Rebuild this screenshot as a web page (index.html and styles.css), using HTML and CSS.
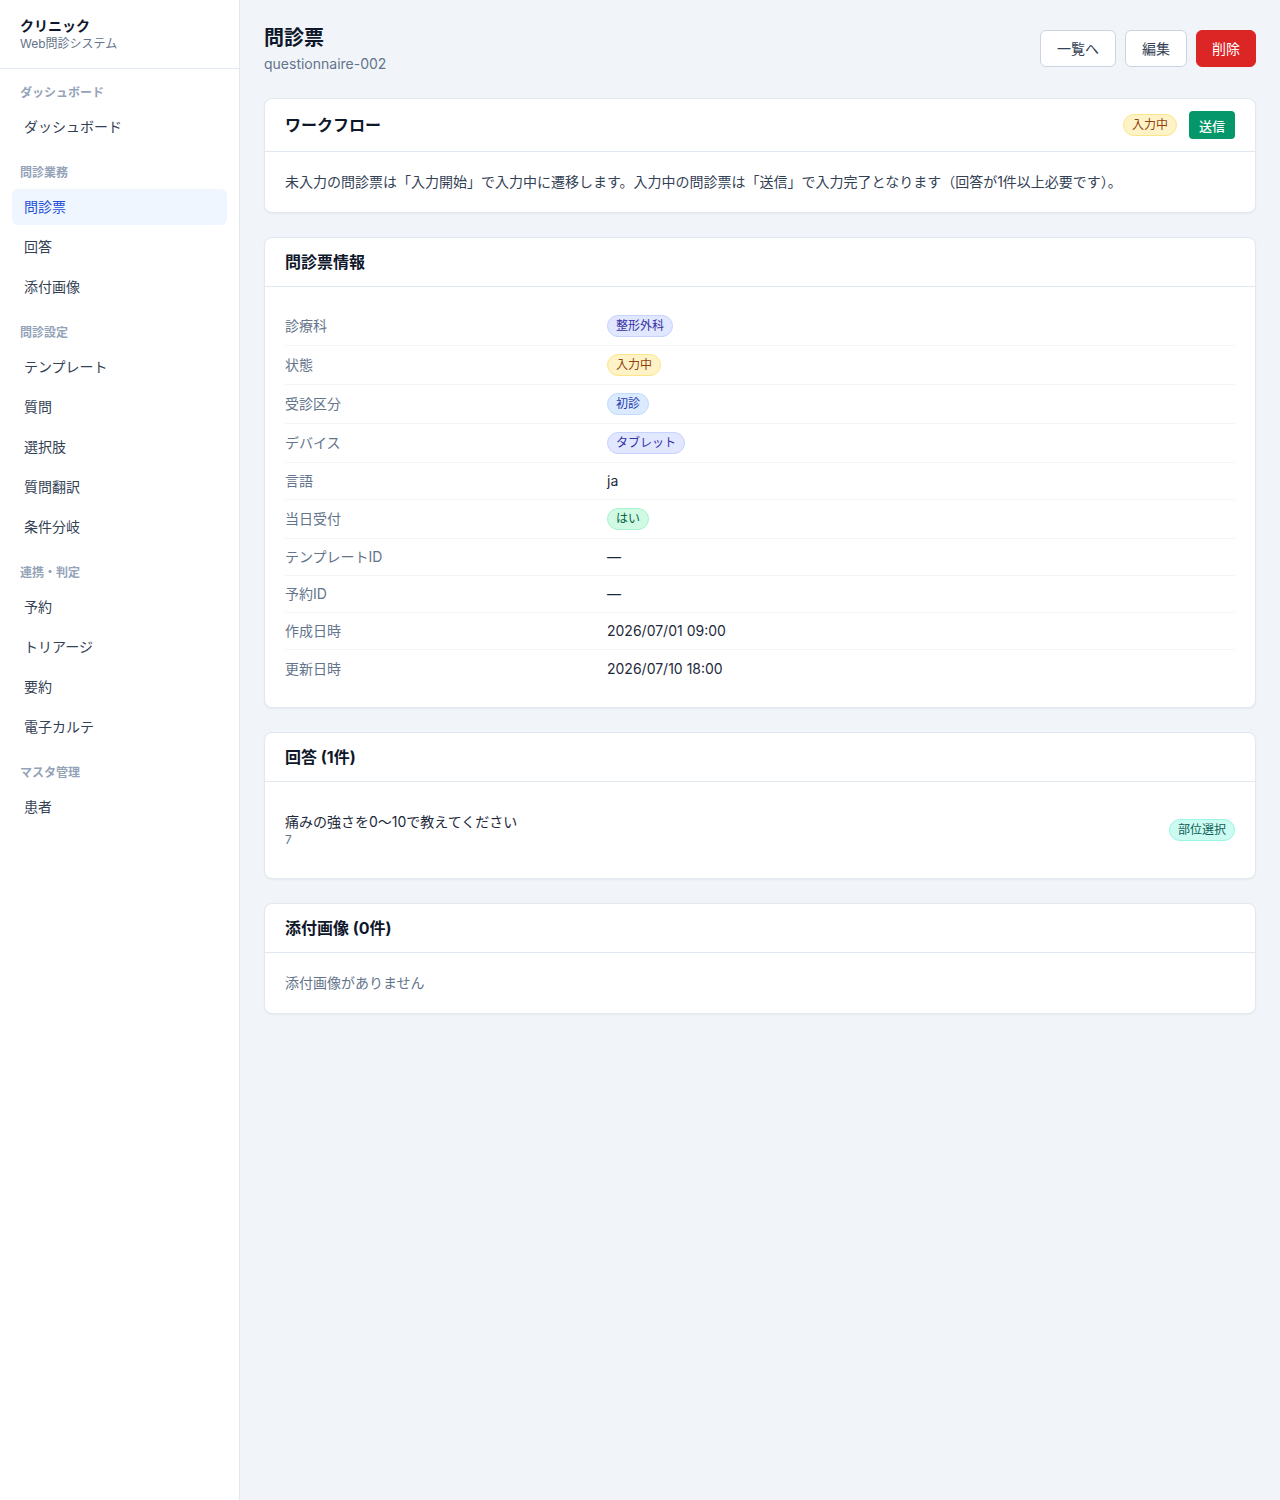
FILE: index.html
```html
<!DOCTYPE html>
<html lang="ja">

<head>
    <meta charset="UTF-8">
    <meta name="viewport" content="width=device-width, initial-scale=1.0">
    <title>問診票 - クリニック</title>
    <link rel="stylesheet" href="styles.css">
</head>

<body>
    <aside class="sidebar">
        <div class="brand">
            <div class="brand-name">クリニック</div>
            <div class="brand-sub">Web問診システム</div>
        </div>
        <nav class="nav">
            <div class="nav-section">
                <div class="nav-label">ダッシュボード</div>
                <a class="nav-item" href="#">ダッシュボード</a>
            </div>
            <div class="nav-section">
                <div class="nav-label">問診業務</div>
                <a class="nav-item active" href="#">問診票</a>
                <a class="nav-item" href="#">回答</a>
                <a class="nav-item" href="#">添付画像</a>
            </div>
            <div class="nav-section">
                <div class="nav-label">問診設定</div>
                <a class="nav-item" href="#">テンプレート</a>
                <a class="nav-item" href="#">質問</a>
                <a class="nav-item" href="#">選択肢</a>
                <a class="nav-item" href="#">質問翻訳</a>
                <a class="nav-item" href="#">条件分岐</a>
            </div>
            <div class="nav-section">
                <div class="nav-label">連携・判定</div>
                <a class="nav-item" href="#">予約</a>
                <a class="nav-item" href="#">トリアージ</a>
                <a class="nav-item" href="#">要約</a>
                <a class="nav-item" href="#">電子カルテ</a>
            </div>
            <div class="nav-section">
                <div class="nav-label">マスタ管理</div>
                <a class="nav-item" href="#">患者</a>
            </div>
        </nav>
    </aside>

    <main class="main">
        <div class="page-header">
            <div>
                <h1 class="page-title">問診票</h1>
                <div class="page-sub">questionnaire-002</div>
            </div>
            <div class="actions">
                <button class="btn">一覧へ</button>
                <button class="btn">編集</button>
                <button class="btn btn-danger">削除</button>
            </div>
        </div>

        <section class="card">
            <div class="card-header">
                <h2 class="card-title">ワークフロー</h2>
                <div class="header-right">
                    <span class="badge badge-yellow">入力中</span>
                    <button class="btn-send">送信</button>
                </div>
            </div>
            <div class="card-body">
                <p class="text">未入力の問診票は「入力開始」で入力中に遷移します。入力中の問診票は「送信」で入力完了となります（回答が1件以上必要です）。</p>
            </div>
        </section>

        <section class="card">
            <div class="card-header">
                <h2 class="card-title">問診票情報</h2>
            </div>
            <div class="card-body">
                <dl class="info">
                    <div class="info-row">
                        <dt>診療科</dt>
                        <dd><span class="badge badge-indigo">整形外科</span></dd>
                    </div>
                    <div class="info-row">
                        <dt>状態</dt>
                        <dd><span class="badge badge-yellow">入力中</span></dd>
                    </div>
                    <div class="info-row">
                        <dt>受診区分</dt>
                        <dd><span class="badge badge-blue">初診</span></dd>
                    </div>
                    <div class="info-row">
                        <dt>デバイス</dt>
                        <dd><span class="badge badge-indigo">タブレット</span></dd>
                    </div>
                    <div class="info-row">
                        <dt>言語</dt>
                        <dd>ja</dd>
                    </div>
                    <div class="info-row">
                        <dt>当日受付</dt>
                        <dd><span class="badge badge-green">はい</span></dd>
                    </div>
                    <div class="info-row">
                        <dt>テンプレートID</dt>
                        <dd>—</dd>
                    </div>
                    <div class="info-row">
                        <dt>予約ID</dt>
                        <dd>—</dd>
                    </div>
                    <div class="info-row">
                        <dt>作成日時</dt>
                        <dd>2026/07/01 09:00</dd>
                    </div>
                    <div class="info-row">
                        <dt>更新日時</dt>
                        <dd>2026/07/10 18:00</dd>
                    </div>
                </dl>
            </div>
        </section>

        <section class="card">
            <div class="card-header">
                <h2 class="card-title">回答 (1件)</h2>
            </div>
            <div class="card-body">
                <div class="answer">
                    <div>
                        <div class="answer-q">痛みの強さを0〜10で教えてください</div>
                        <div class="answer-a">7</div>
                    </div>
                    <span class="badge badge-teal">部位選択</span>
                </div>
            </div>
        </section>

        <section class="card">
            <div class="card-header">
                <h2 class="card-title">添付画像 (0件)</h2>
            </div>
            <div class="card-body">
                <p class="text muted">添付画像がありません</p>
            </div>
        </section>
    </main>
</body>

</html>
```

FILE: styles.css
```css
* {
    margin: 0;
    padding: 0;
    box-sizing: border-box;
}

body {
    display: flex;
    min-height: 1500px;
    background-color: #f1f5f9;
    color: #1e293b;
    font-family: Inter, "Noto Sans CJK JP", sans-serif;
    font-size: 14px;
    line-height: 20px;
}

/* sidebar */
.sidebar {
    width: 240px;
    flex-shrink: 0;
    background-color: #ffffff;
    border-right: 1px solid #e2e8f0;
}

.brand {
    padding: 16px 20px;
    border-bottom: 1px solid #e2e8f0;
}

.brand-name {
    font-size: 14px;
    font-weight: 700;
    color: #0f172a;
}

.brand-sub {
    font-size: 12px;
    line-height: 16px;
    color: #64748b;
}

.nav {
    padding: 16px 12px;
}

.nav-section {
    display: flex;
    flex-direction: column;
    gap: 4px;
    margin-bottom: 20px;
}

.nav-label {
    padding: 0 8px;
    margin-bottom: 4px;
    font-size: 12px;
    line-height: 16px;
    font-weight: 700;
    color: #94a3b8;
}

.nav-item {
    display: flex;
    align-items: center;
    height: 36px;
    padding: 0 12px;
    border-radius: 6px;
    color: #334155;
    text-decoration: none;
}

.nav-item.active {
    background-color: #eff6ff;
    color: #1d4ed8;
}

/* main */
.main {
    flex: 1;
    padding: 24px;
}

.page-header {
    display: flex;
    justify-content: space-between;
    align-items: center;
    margin-bottom: 24px;
}

.page-title {
    font-size: 20px;
    line-height: 28px;
    font-weight: 700;
    color: #0f172a;
}

.page-sub {
    margin-top: 2px;
    color: #64748b;
}

.actions {
    display: flex;
    gap: 9px;
    margin-top: -2px;
}

.btn {
    padding: 8px 16px;
    line-height: 19px;
    font-family: inherit;
    font-size: 14px;
    color: #334155;
    background-color: #ffffff;
    border: 1px solid #cbd5e1;
    border-radius: 6px;
}

.btn-danger {
    padding: 8px 15px;
    background-color: #dc2626;
    border-color: #dc2626;
    color: #ffffff;
}

.card {
    background-color: #ffffff;
    border: 1px solid #e2e8f0;
    border-radius: 8px;
    box-shadow: 0 1px 2px rgba(15, 23, 42, 0.05);
    margin-bottom: 24px;
}

.card-header {
    display: flex;
    justify-content: space-between;
    align-items: center;
    padding: 12px 20px;
    border-bottom: 1px solid #e2e8f0;
}

.card-title {
    font-size: 16px;
    line-height: 24px;
    font-weight: 700;
    color: #0f172a;
}

.header-right {
    display: flex;
    align-items: center;
    gap: 12px;
}

.btn-send {
    height: 28px;
    padding: 0 10px;
    font-family: inherit;
    font-size: 13px;
    font-weight: 500;
    color: #ffffff;
    background-color: #059669;
    border: 0;
    border-radius: 4px;
}

.card-body {
    padding: 20px;
}

.text {
    color: #334155;
}

.muted {
    color: #64748b;
}

/* badges */
.badge {
    display: inline-block;
    padding: 2px 8px;
    font-size: 12px;
    line-height: 16px;
    border: 1px solid transparent;
    border-radius: 999px;
    white-space: nowrap;
}

.badge-indigo {
    background-color: #e0e7ff;
    border-color: #c7d2fe;
    color: #3730a3;
}

.badge-yellow {
    background-color: #fef3c7;
    border-color: #fde68a;
    color: #92400e;
}

.badge-blue {
    background-color: #dbeafe;
    border-color: #bfdbfe;
    color: #1e40af;
}

.badge-green {
    background-color: #d1fae5;
    border-color: #a7f3d0;
    color: #065f46;
}

.badge-teal {
    background-color: #ccfbf1;
    border-color: #99f6e4;
    color: #115e59;
}

/* info list */
.info-row {
    display: grid;
    grid-template-columns: 322px 1fr;
    align-items: center;
    padding: 8px 0;
    min-height: 37px;
    border-bottom: 1px solid #f1f5f9;
}

.info-row:last-child {
    border-bottom: 0;
}

.info-row dt {
    color: #64748b;
}

.info-row dd {
    color: #1e293b;
}

/* answers */
.answer {
    display: flex;
    justify-content: space-between;
    align-items: center;
    padding: 10px 0;
}

.answer-q {
    color: #1e293b;
}

.answer-a {
    font-size: 12px;
    line-height: 16px;
    color: #64748b;
}
```
